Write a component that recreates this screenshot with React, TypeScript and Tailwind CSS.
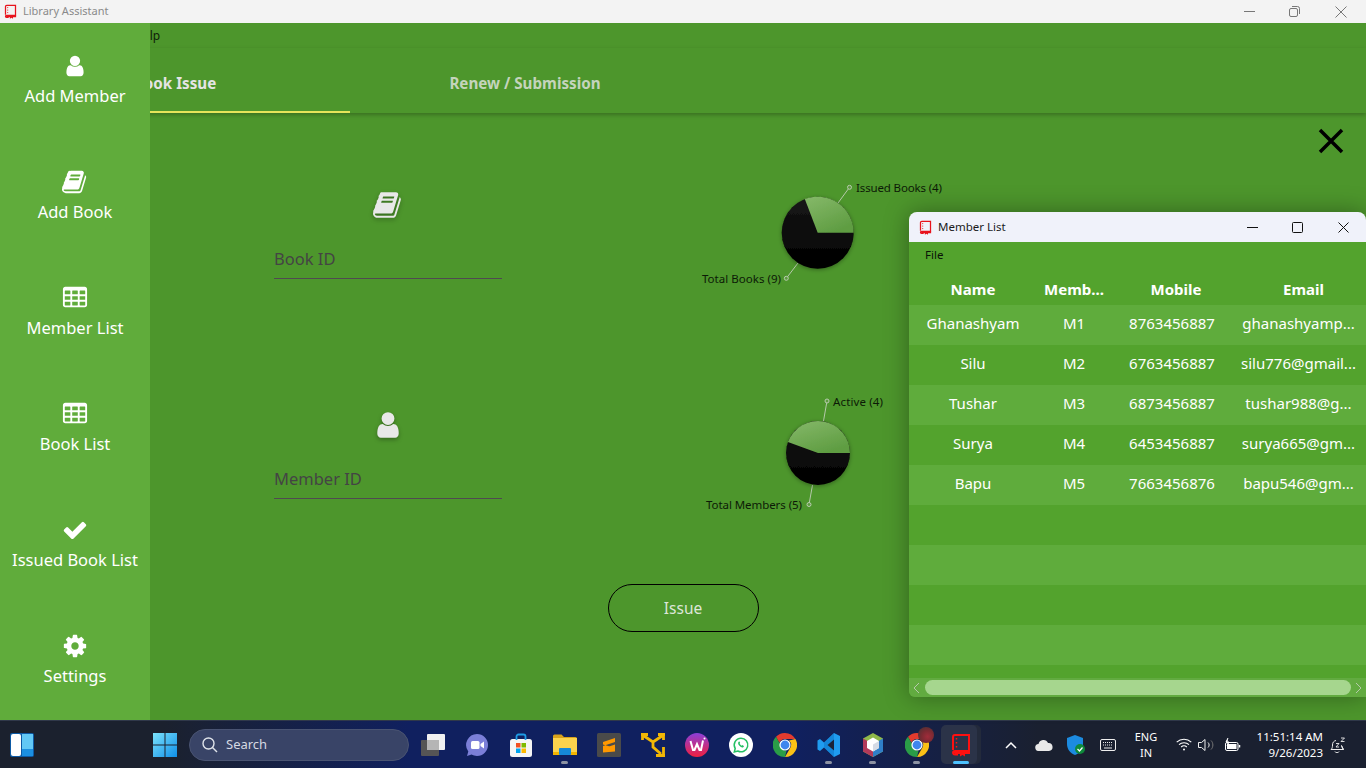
import React from "react";

const BOOK = "M1639 478q40 57 18 129l-275 906q-19 64-76.5 107.5t-122.5 43.5h-923q-77 0-148.5-53.5t-99.5-131.5q-24-67-2-127 0-4 3-27t4-37q1-8-3-21.5t-3-19.5q2-11 8-21t16.5-23.5 16.5-23.5q23-38 45-91.5t30-91.5q3-10 .5-30t-.5-28q3-11 17-28t17-23q21-36 42-92t25-90q1-9-2.5-32t.5-28q4-13 22-30.5t22-22.5q19-26 42.5-84.5t27.5-96.5q1-8-3-25.5t-2-26.5q2-8 9-18t18-23 17-21q8-12 16.5-30.5t15-35 16-36 19.5-32 26.5-23.5 36-11.5 47.5 5.5l-1 3q38-9 51-9h761q74 0 114 56t18 130l-274 906q-36 119-71.5 153.5t-128.5 34.5h-869q-27 0-38 15-11 16-1 43 24 70 144 70h923q29 0 56-15.5t35-41.5l300-987q7-22 5-57 38 15 59 43zm-1064 2q-4 13 2 22.5t20 9.5h608q13 0 25.5-9.5t16.5-22.5l21-64q4-13-2-22.5t-20-9.5h-608q-13 0-25.5 9.5t-16.5 22.5zm-83 256q-4 13 2 22.5t20 9.5h608q13 0 25.5-9.5t16.5-22.5l21-64q4-13-2-22.5t-20-9.5h-608q-13 0-25.5 9.5t-16.5 22.5z";
const USER = "M1536 1399q0 109-62.5 187t-150.5 78h-854q-88 0-150.5-78t-62.5-187q0-85 8.5-160.5t31.5-152 58.5-131 94-89 134.5-34.5q131 128 313 128t313-128q76 0 134.5 34.5t94 89 58.5 131 31.5 152 8.5 160.5zm-256-887q0 159-112.5 271.5t-271.5 112.5-271.5-112.5-112.5-271.5 112.5-271.5 271.5-112.5 271.5 112.5 112.5 271.5z";
const TABLE = "M576 1376v-192q0-14-9-23t-23-9h-320q-14 0-23 9t-9 23v192q0 14 9 23t23 9h320q14 0 23-9t9-23zm0-384v-192q0-14-9-23t-23-9h-320q-14 0-23 9t-9 23v192q0 14 9 23t23 9h320q14 0 23-9t9-23zm512 384v-192q0-14-9-23t-23-9h-320q-14 0-23 9t-9 23v192q0 14 9 23t23 9h320q14 0 23-9t9-23zm-512-768v-192q0-14-9-23t-23-9h-320q-14 0-23 9t-9 23v192q0 14 9 23t23 9h320q14 0 23-9t9-23zm512 384v-192q0-14-9-23t-23-9h-320q-14 0-23 9t-9 23v192q0 14 9 23t23 9h320q14 0 23-9t9-23zm512 384v-192q0-14-9-23t-23-9h-320q-14 0-23 9t-9 23v192q0 14 9 23t23 9h320q14 0 23-9t9-23zm-512-768v-192q0-14-9-23t-23-9h-320q-14 0-23 9t-9 23v192q0 14 9 23t23 9h320q14 0 23-9t9-23zm512 384v-192q0-14-9-23t-23-9h-320q-14 0-23 9t-9 23v192q0 14 9 23t23 9h320q14 0 23-9t9-23zm0-384v-192q0-14-9-23t-23-9h-320q-14 0-23 9t-9 23v192q0 14 9 23t23 9h320q14 0 23-9t9-23zm128-320v1088q0 66-47 113t-113 47h-1344q-66 0-113-47t-47-113v-1088q0-66 47-113t113-47h1344q66 0 113 47t47 113z";
const CHECK = "M1671 566q0 40-28 68l-724 724-136 136q-28 28-68 28t-68-28l-136-136-362-362q-28-28-28-68t28-68l136-136q28-28 68-28t68 28l294 295 656-657q28-28 68-28t68 28l136 136q28 28 28 68z";
const COG = "M1152 896q0-106-75-181t-181-75-181 75-75 181 75 181 181 75 181-75 75-181zm512-109v222q0 12-8 23t-20 13l-185 28q-19 54-39 91 35 50 107 138 10 12 10 25t-9 23q-27 37-99 108t-94 71q-12 0-26-9l-138-108q-44 23-91 38-16 136-29 186-7 28-36 28h-222q-14 0-24.5-8.5t-11.5-21.5l-28-184q-49-16-90-37l-141 107q-10 9-25 9-14 0-25-11-126-114-165-168-7-10-7-23 0-12 8-23 15-21 51-66.5t54-70.5q-27-50-41-99l-183-27q-13-2-21-12.5t-8-23.5v-222q0-12 8-23t19-13l186-28q14-46 39-92-40-57-107-138-10-12-10-24 0-10 9-23 26-36 98.5-107.5t94.5-71.5q13 0 26 10l138 107q44-23 91-38 16-136 29-186 7-28 36-28h222q14 0 24.5 8.5t11.5 21.5l28 184q49 16 90 37l142-107q9-9 24-9 13 0 25 10 129 119 165 170 7 8 7 22 0 12-8 23-15 21-51 66.5t-54 70.5q26 50 41 98l183 28q13 2 21 12.5t8 23.5z";

function Fa({ d, size, className }: { d: string; size: number; className?: string }) {
  return (
    <svg viewBox="0 0 1792 1792" width={size} height={size} fill="currentColor" className={className}>
      <path d={d} />
    </svg>
  );
}

function RedBook({ size, stroke = "#e8131c" }: { size: number; stroke?: string }) {
  return (
    <svg viewBox="0 0 24 24" width={size} height={size} fill="none">
      <path d="M4 17V4a2 2 0 0 1 2-2h14v16H6a2 2 0 0 0-2 2 2 2 0 0 0 2 1.500h3" stroke={stroke} strokeWidth="2" />
      <path d="M3.500 18.500H21v2.500h-5v2.500l-2.500-1.500L11 23.500v-2.500H6z" fill={stroke} />
      <path d="M7.500 5v1.500M7.500 9v1.500M7.500 13v1.500" stroke={stroke} strokeWidth="1.500" />
    </svg>
  );
}

const sideItems = [
  { d: USER, size: 24, label: "Add Member" },
  { d: BOOK, size: 26, label: "Add Book" },
  { d: TABLE, size: 26, label: "Member List" },
  { d: TABLE, size: 26, label: "Book List" },
  { d: CHECK, size: 26, label: "Issued Book List" },
  { d: COG, size: 26, label: "Settings" },
];

const members = [
  ["Ghanashyam", "M1", "8763456887", "ghanashyamp..."],
  ["Silu", "M2", "6763456887", "silu776@gmail..."],
  ["Tushar", "M3", "6873456887", "tushar988@g..."],
  ["Surya", "M4", "6453456887", "surya665@gm..."],
  ["Bapu", "M5", "7663456876", "bapu546@gm..."],
];

function PieOne() {
  return (
    <svg width={260} height={115} viewBox="690 175 260 115" className="block shrink-0">
      <defs>
        <linearGradient id="lg1" x1="0" y1="0" x2="0.6" y2="1">
          <stop offset="0" stopColor="#86b96a" />
          <stop offset="1" stopColor="#5f9d42" />
        </linearGradient>
        <linearGradient id="dk1" x1="0" y1="0" x2="0" y2="1">
          <stop offset="0" stopColor="#171717" />
          <stop offset="1" stopColor="#000" />
        </linearGradient>
        <filter id="ps1" x="-30%" y="-30%" width="160%" height="160%">
          <feDropShadow dx="0" dy="1" stdDeviation="2" floodOpacity="0.35" />
        </filter>
      </defs>
      <path d="M838 203L849.500 187.300M798 263L786.300 278.300" stroke="#b5c9aa" strokeWidth="1" />
      <circle cx="849.500" cy="187.300" r="2" fill="#5d9c3f" stroke="#b9cbb0" />
      <circle cx="786.300" cy="278.300" r="2" fill="#5d9c3f" stroke="#b9cbb0" />
      <g filter="url(#ps1)">
        <circle cx="817.700" cy="232.700" r="36" fill="url(#dk1)" />
        <path d="M817.700 232.700H853.700A36 36 0 0 0 804.800 199.100Z" fill="url(#lg1)" />
      </g>
      <text x="856" y="191.500" fontSize="11.500" fill="#0c1a06" fontFamily="'Noto Sans', sans-serif" textLength="86">Issued Books (4)</text>
      <text x="702" y="283" fontSize="11.500" fill="#0c1a06" fontFamily="'Noto Sans', sans-serif" textLength="79">Total Books (9)</text>
    </svg>
  );
}

function PieTwo() {
  return (
    <svg width={210} height={125} viewBox="690 390 210 125" className="block shrink-0">
      <defs>
        <linearGradient id="lg2" x1="0" y1="0" x2="0.6" y2="1">
          <stop offset="0" stopColor="#86b96a" />
          <stop offset="1" stopColor="#5f9d42" />
        </linearGradient>
        <linearGradient id="dk2" x1="0" y1="0" x2="0" y2="1">
          <stop offset="0" stopColor="#171717" />
          <stop offset="1" stopColor="#000" />
        </linearGradient>
        <filter id="ps2" x="-30%" y="-30%" width="160%" height="160%">
          <feDropShadow dx="0" dy="1" stdDeviation="2" floodOpacity="0.35" />
        </filter>
      </defs>
      <path d="M823.500 421L827 401M812.500 485L809 504.500" stroke="#b5c9aa" strokeWidth="1" />
      <circle cx="827" cy="401" r="2" fill="#5d9c3f" stroke="#b9cbb0" />
      <circle cx="809" cy="504.500" r="2" fill="#5d9c3f" stroke="#b9cbb0" />
      <g filter="url(#ps2)">
        <circle cx="818" cy="453" r="32" fill="url(#dk2)" />
        <path d="M818 453H850A32 32 0 0 0 787.930 442.060Z" fill="url(#lg2)" />
      </g>
      <text x="833" y="406" fontSize="11.500" fill="#0c1a06" fontFamily="'Noto Sans', sans-serif" textLength="50">Active (4)</text>
      <text x="706" y="509" fontSize="11.500" fill="#0c1a06" fontFamily="'Noto Sans', sans-serif" textLength="96">Total Members (5)</text>
    </svg>
  );
}

function Field({ d, iconSize, placeholder, pt }: { d: string; iconSize: number; placeholder: string; pt: string }) {
  return (
    <div className={`w-[228px] flex flex-col shrink-0 ${pt}`}>
      <div className="flex justify-center h-[28px] items-center text-[#e8e8e8] drop-shadow-[0_2px_2px_rgba(0,0,0,0.3)]">
        <Fa d={d} size={iconSize} />
      </div>
      <input
        readOnly
        placeholder={placeholder}
        className="mt-[24px] h-[36px] pb-[4px] w-full border-b border-[#4f4a50] bg-transparent text-[16.500px] outline-none placeholder:text-[#444444]"
      />
    </div>
  );
}

function Slot({ children, dot, active }: { children: React.ReactNode; dot?: boolean; active?: boolean }) {
  return (
    <div className="relative w-[44px] h-[48px] flex items-center justify-center shrink-0">
      {active && <div className="absolute left-[6px] top-[4px] h-[39px] w-[36px] rounded-[5px] bg-[#232a3b]" />}
      {active && <div className="absolute left-[2px] top-[4px] h-[39px] w-[36px] rounded-[5px] bg-[#2b3348]" />}
      <div className="relative flex">{children}</div>
      {dot && <div className="absolute left-[18px] top-[40px] h-[3px] w-[7px] rounded-full bg-[#8d93a3]" />}
      {active && <div className="absolute left-[14px] top-[40px] h-[3px] w-[16px] rounded-full bg-[#4cc2ff]" />}
    </div>
  );
}

function Chrome({ size = 24 }: { size?: number }) {
  return (
    <svg viewBox="0 0 24 24" width={size} height={size}>
      <path d="M12 0a12 12 0 0 1 10.400 6H12a6 6 0 0 0-5.600 3.700L3 3.800A12 12 0 0 1 12 0z" fill="#e33b2e" />
      <path d="M22.400 6A12 12 0 0 1 12 24l5.200-9A6 6 0 0 0 16 7.500z" fill="#fbc116" />
      <path d="M12 24A12 12 0 0 1 3 3.800L8 12.700A6 6 0 0 0 13.500 17.800z" fill="#2a9d47" />
      <circle cx="12" cy="12" r="5.600" fill="#fff" />
      <circle cx="12" cy="12" r="4.400" fill="#3f86ee" />
    </svg>
  );
}

export default function App() {
  const font = { fontFamily: "'Noto Sans', 'Open Sans', sans-serif" };
  return (
    <div className="relative w-[1366px] h-[768px] overflow-hidden flex flex-col bg-[#4d962c]" style={font}>
      {/* App title bar */}
      <div className="h-[23px] shrink-0 bg-[#f3f3f3] flex items-center">
        <div className="ml-[3px] flex"><RedBook size={15} /></div>
        <span className="ml-[5px] text-[11px] text-[#8a8a8a]">Library Assistant</span>
        <div className="ml-auto flex items-center text-[#777]">
          <svg width="11" height="11" viewBox="0 0 11 11" className="mr-[34px]"><path d="M0 5.500h11" stroke="currentColor" /></svg>
          <svg width="11" height="11" viewBox="0 0 11 11" className="mr-[35px]" fill="none" stroke="currentColor"><rect x="0.500" y="2.500" width="8" height="8" rx="1.500" /><path d="M3 0.500h5.500a2 2 0 0 1 2 2V8" /></svg>
          <svg width="12" height="12" viewBox="0 0 12 12" className="mr-[19px]" stroke="currentColor"><path d="M0.500 0.500l11 11M11.500 0.500l-11 11" /></svg>
        </div>
      </div>

      {/* App body */}
      <div className="h-[697px] shrink-0 flex">
        <aside className="w-[150px] shrink-0 bg-[#60ac3b] grid grid-rows-6 text-white">
          {sideItems.map((s) => (
            <div key={s.label} className="flex flex-col items-center justify-center gap-[5px] pb-[2px]">
              <div className="h-[26px] flex items-center"><Fa d={s.d} size={s.size} /></div>
              <span className="text-[16.500px] leading-[24px] whitespace-nowrap">{s.label}</span>
            </div>
          ))}
        </aside>

        <main className="flex-1 overflow-hidden">
          <div className="w-[1366px] -ml-[150px] h-full flex flex-col">
            <div className="h-[25px] shrink-0 pl-[134px] pt-[1px] flex items-center text-[12px] text-[#10200a]">Help</div>
            <div className="relative h-[65px] shrink-0 flex shadow-[0_2px_4px_rgba(0,0,0,0.25)]">
              <div className="w-[350px] pt-[8px] flex items-center justify-center border-b-2 border-[#e6e45a] text-[15.200px] font-bold text-[#e4e4e4]">Book Issue</div>
              <div className="w-[350px] pt-[6px] flex items-center justify-center text-[15.200px] font-bold text-[#c4d4bc]">Renew / Submission</div>
              <div className="ml-auto mr-[22px] mt-[80px] h-[26px] w-[26px] text-black">
                <svg viewBox="0 0 26 26" width="26" height="26"><path d="M2 2l22 22M24 2L2 24" stroke="currentColor" strokeWidth="3.500" /></svg>
              </div>
            </div>

            <div className="flex flex-col">
              <div className="flex items-start mt-[62px]">
                <div className="ml-[274px]"><Field d={BOOK} iconSize={30} placeholder="Book ID" pt="pt-[16px]" /></div>
                <div className="ml-[188px]"><PieOne /></div>
              </div>
              <div className="flex items-start mt-[100px]">
                <div className="ml-[274px]"><Field d={USER} iconSize={30} placeholder="Member ID" pt="pt-[21px]" /></div>
                <div className="ml-[188px]"><PieTwo /></div>
              </div>
              <button className="mt-[69px] mx-auto w-[151px] h-[48px] pt-[1px] rounded-full border border-black text-[15.500px] text-[#dde6d8]">Issue</button>
            </div>
          </div>
        </main>
      </div>

      {/* Taskbar */}
      <footer className="h-[48px] shrink-0 flex items-center border-t border-[#30384a] bg-[linear-gradient(90deg,#1b212e_0%,#1b212e_12%,#10205f_30%,#10205f_58%,#1a2030_76%,#1a2030_100%)] text-white">
        <div className="ml-[10px] w-[24px] h-[24px] rounded-[2px] bg-[#0d5aa5] flex gap-[1px] p-[1px] shrink-0">
          <div className="w-[10px] h-full rounded-[2px] bg-white" />
          <div className="flex-1 flex flex-col"><div className="flex-1 bg-[#62c8f5]" /><div className="h-[7px] bg-[#1c8fe0]" /></div>
        </div>
        <div className="ml-[109px] shrink-0">
          <Slot>
            <svg width="24" height="24" viewBox="0 0 24 24">
              <defs><linearGradient id="win" x1="0" y1="0" x2="1" y2="1"><stop offset="0" stopColor="#7ce2fb" /><stop offset="1" stopColor="#0f8fe8" /></linearGradient></defs>
              <path d="M0 0h11.500v11.500H0zM12.500 0H24v11.500H12.500zM0 12.500h11.500V24H0zM12.500 12.500H24V24H12.500z" fill="url(#win)" />
            </svg>
          </Slot>
        </div>
        <div className="ml-[2px] w-[220px] h-[32px] rounded-full bg-[#394467] border border-[#4a5472] flex items-center shrink-0 pl-[12px] gap-[8px]">
          <svg width="16" height="16" viewBox="0 0 16 16" fill="none" stroke="#dfe3ea" strokeWidth="1.400"><circle cx="6.500" cy="6.500" r="5.500" /><path d="M10.500 10.500L15 15" /></svg>
          <span className="text-[13px] text-[#d6d9e2]">Search</span>
        </div>
        <div className="ml-[2px] flex shrink-0">
          <Slot>
            <svg width="24" height="24" viewBox="0 0 24 24"><rect x="0" y="7" width="18" height="16" rx="1" fill="#555" /><rect x="6" y="1" width="18" height="16" rx="1" fill="#f1f1f1" /><rect x="6" y="7" width="12" height="10" fill="#b5b5b5" /></svg>
          </Slot>
          <Slot>
            <svg width="24" height="24" viewBox="0 0 24 24"><path d="M12 1a11 11 0 0 1 0 22c-2 0-4-.5-5.500-1.400L2 23l1.300-4.500A11 11 0 0 1 12 1z" fill="#7b7fd8" /><rect x="6" y="8" width="8.500" height="8" rx="1.500" fill="#fff" /><path d="M15.500 11l3.500-2.500v7L15.500 13z" fill="#fff" /></svg>
          </Slot>
          <Slot>
            <svg width="24" height="24" viewBox="0 0 24 24"><rect x="1" y="6" width="22" height="18" rx="2.500" fill="#f5f5f5" /><path d="M7.500 7V3.500a2 2 0 0 1 2-2h5a2 2 0 0 1 2 2V7" fill="none" stroke="#1e9ce6" strokeWidth="1.800" /><rect x="7" y="10" width="4.500" height="4.500" fill="#f25022" /><rect x="12.500" y="10" width="4.500" height="4.500" fill="#7fba00" /><rect x="7" y="15.500" width="4.500" height="4.500" fill="#00a4ef" /><rect x="12.500" y="15.500" width="4.500" height="4.500" fill="#ffb900" /></svg>
          </Slot>
          <Slot dot>
            <svg width="24" height="24" viewBox="0 0 24 24"><path d="M0 3a1.500 1.500 0 0 1 1.500-1.500h7L11 4h11.500A1.500 1.500 0 0 1 24 5.500V8H0z" fill="#d9a21b" /><path d="M0 5h24v17H0z" fill="#fcd34d" /><rect x="0" y="19" width="24" height="3" fill="#f4b400" /><rect x="6" y="15" width="12" height="7" rx="1" fill="#1689d8" /></svg>
          </Slot>
          <Slot>
            <svg width="24" height="24" viewBox="0 0 24 24"><rect width="24" height="24" rx="1.500" fill="#4a4a4a" /><path d="M18 5L6 9v4l12-4zM6 11.500L18 15v3.500l-12 1V15.500L18 11.500v3.500L6 19v-3.500z" fill="#ff9800" /></svg>
          </Slot>
          <Slot>
            <svg width="24" height="24" viewBox="0 0 24 24" fill="none" stroke="#f2b705" strokeWidth="2.800"><path d="M0 1.500h7M1.500 0v7M17 1.500h7M22.500 0v7M15 22.500h9M22.500 14v10M3 3l9 6 9-6M12 9v5l8 7" /></svg>
          </Slot>
          <Slot>
            <svg width="24" height="24" viewBox="0 0 24 24"><defs><linearGradient id="wps" x1="0" y1="0" x2="0" y2="1"><stop offset="0" stopColor="#8b3fd9" /><stop offset="1" stopColor="#f0203f" /></linearGradient></defs><circle cx="12" cy="12" r="12" fill="url(#wps)" /><path d="M5.500 8l2.500 9h1.500l2.500-6 2.500 6H16l2-9.500" fill="none" stroke="#fff" strokeWidth="2" /><circle cx="19.500" cy="5.500" r="1" fill="#fff" /></svg>
          </Slot>
          <Slot>
            <svg width="24" height="24" viewBox="0 0 24 24"><circle cx="12" cy="12" r="12" fill="#fff" /><path d="M12 5.200a6.800 6.800 0 0 0-5.800 10.300L5.300 19l3.500-1A6.800 6.800 0 1 0 12 5.200z" fill="none" stroke="#25c063" strokeWidth="1.500" /><path d="M9.700 8.700c-.9.800-.8 2.200.5 3.800 1.400 1.600 3 2.300 4 1.700.7-.4.800-1 .6-1.300l-1.400-.8-.7.600c-1-.4-1.700-1.200-2.100-2.100l.6-.7-.7-1.400c-.2-.1-.5-.1-.8.200z" fill="#25c063" /></svg>
          </Slot>
          <Slot><Chrome /></Slot>
          <Slot dot>
            <svg width="24" height="24" viewBox="0 0 24 24"><path d="M17 0l6 3v18l-6 3L7 14.500 3 18l-2.500-1.500v-9L3 6l4 3.500z" fill="#1f9cf0" /><path d="M17 0v24L7 14.500V9.500z" fill="#0a6fc2" opacity="0.500" /><path d="M17 6.500L10.500 12l6.500 5.500z" fill="#1b2338" /></svg>
          </Slot>
          <Slot dot>
            <svg width="24" height="24" viewBox="0 0 24 24"><path d="M12 0l10 5.500v13L12 24 2 18.500v-13z" fill="#8fb84a" /><path d="M2 5.500l10 5.500v13L2 18.500z" fill="#b23a5a" /><path d="M22 5.500L12 11v13l10-5.500z" fill="#2f7fc9" /><path d="M12 4.500l6 3.500v7l-6 3.500L6 15V8z" fill="#fff" /><path d="M12 11.500l6-3.500v7l-6 3.500z" fill="#d5dbe5" /></svg>
          </Slot>
          <Slot dot>
            <div className="relative">
              <Chrome />
              <div className="absolute -right-[5px] -top-[6px] w-[16px] h-[16px] rounded-full bg-[radial-gradient(circle_at_60%_60%,#a02c3a_0%,#7a2a32_45%,#3a3436_100%)]" />
            </div>
          </Slot>
          <Slot active><RedBook size={24} stroke="#ff1010" /></Slot>
        </div>
        <div className="ml-[20px] w-[16px] flex justify-center shrink-0">
          <svg width="12" height="8" viewBox="0 0 12 8" fill="none" stroke="#fff" strokeWidth="1.500"><path d="M1 7l5-5 5 5" /></svg>
        </div>
        <div className="ml-[15px] w-[20px] flex justify-center shrink-0">
          <svg width="18" height="12" viewBox="0 0 18 12"><path d="M4 12a3.500 3.500 0 0 1-.5-7A5 5 0 0 1 13 4a4 4 0 0 1 1 8z" fill="#e9e9e9" /></svg>
        </div>
        <div className="ml-[13px] w-[18px] flex justify-center shrink-0">
          <svg width="18" height="20" viewBox="0 0 18 20"><path d="M8 0l8 3v6c0 5-3 9-8 11-5-2-8-6-8-11V3z" fill="#1c8be0" /><circle cx="13" cy="14" r="5" fill="#0e8a3a" /><path d="M10.500 14l2 2 3-3.500" fill="none" stroke="#fff" strokeWidth="1.200" /></svg>
        </div>
        <div className="ml-[14px] w-[18px] flex justify-center shrink-0">
          <svg width="16" height="12" viewBox="0 0 16 12" fill="none" stroke="#eee"><rect x="0.500" y="0.500" width="15" height="11" rx="1.500" /><path d="M3 3.500h10M3 6h10" strokeDasharray="1 1" /><path d="M4 9h8" /></svg>
        </div>
        <div className="ml-[14px] w-[30px] text-center text-[11px] leading-[16px] shrink-0">ENG<br />IN</div>
        <div className="ml-[14px] w-[18px] flex justify-center shrink-0">
          <svg width="16" height="13" viewBox="0 0 16 13" fill="none" stroke="#fff" strokeWidth="1.100"><path d="M.7 4.200a10.500 10.500 0 0 1 14.600 0M3 6.700a7.200 7.200 0 0 1 10 0M5.200 9a4 4 0 0 1 5.600 0" /><circle cx="8" cy="11.500" r="1" fill="#fff" stroke="none" /></svg>
        </div>
        <div className="ml-[4px] w-[18px] flex justify-center shrink-0">
          <svg width="17" height="14" viewBox="0 0 17 14" fill="none" stroke="#eee"><path d="M.5 4.500h3L7 1.500v11l-3.500-3h-3zM10 4.500c1.500 1.500 1.500 3.500 0 5" /><path d="M13 2.500c2.500 2.500 2.500 6.500 0 9" stroke="#777" /></svg>
        </div>
        <div className="ml-[8px] w-[18px] flex justify-center shrink-0">
          <svg width="17" height="14" viewBox="0 0 17 14" fill="none" stroke="#fff"><rect x="1.500" y="4.500" width="12.500" height="8" rx="1.500" /><rect x="3" y="6" width="9.500" height="5" fill="#fff" stroke="none" /><path d="M15.500 7v2.500" strokeWidth="1.500" /><path d="M4 0L2 4h3L3 8" fill="#fff" /></svg>
        </div>
        <div className="w-[82px] text-right text-[11.500px] leading-[16px] shrink-0">11:51:14 AM<br />9/26/2023</div>
        <div className="ml-[7px] w-[16px] flex justify-center shrink-0">
          <svg width="16" height="16" viewBox="0 0 16 16" fill="none" stroke="#eee"><path d="M1 12.500c1.200-1 1.500-2.500 1.500-4.500 0-2.500 1.200-4 3.500-4.500M11.500 8.500c.2 1.800 1 3 2 4zM1 12.500h12.500M5 14.500a2.200 2.200 0 0 0 4 0" /><path d="M6 6.500h3l-3 3.500h3M11 1h3.500L11 4.500h3.500" strokeWidth="0.900" /></svg>
        </div>
      </footer>

      {/* Floating Member List window */}
      <section className="absolute left-[909px] top-[212px] w-[457px] h-[485px] rounded-tl-[8px] rounded-tr-[8px] rounded-bl-[6px] overflow-hidden flex flex-col bg-[#53a32d] shadow-[0_0_24px_rgba(0,0,0,0.35)]">
        <div className="h-[30px] shrink-0 bg-[#f0f2fa] flex items-center">
          <div className="ml-[9px] flex"><RedBook size={15} /></div>
          <span className="ml-[5px] text-[11.500px] text-[#1a1a1a]">Member List</span>
          <div className="ml-auto flex items-center text-[#111]">
            <svg width="11" height="11" viewBox="0 0 11 11" className="mr-[34px]"><path d="M0 5.500h11" stroke="currentColor" /></svg>
            <svg width="11" height="11" viewBox="0 0 11 11" className="mr-[35px]" fill="none" stroke="currentColor"><rect x="0.500" y="0.500" width="10" height="10" rx="1" /></svg>
            <svg width="11" height="11" viewBox="0 0 11 11" className="mr-[17px]" stroke="currentColor"><path d="M0.500 0.500l10 10M10.500 0.500l-10 10" /></svg>
          </div>
        </div>
        <div className="h-[25px] shrink-0 pl-[16px] flex items-center text-[11.500px] text-[#0a1406]">File</div>
        <div className="h-[38px] shrink-0 grid grid-cols-[128px_74px_130px_125px] items-center text-center pt-[6px] text-[15px] font-bold text-white">
          <span>Name</span><span>Memb...</span><span>Mobile</span><span>Email</span>
        </div>
        {members.map((m, i) => (
          <div key={m[0]} className={`h-[40px] shrink-0 grid grid-cols-[128px_74px_130px_125px] items-center text-center pb-[4px] text-[15px] text-white ${i % 2 === 0 ? "bg-[#5fac3c]" : "bg-[#53a32d]"}`}>
            <span>{m[0]}</span><span>{m[1]}</span><span className="pr-[8px]">{m[2]}</span><span className="pr-[10px] whitespace-nowrap">{m[3]}</span>
          </div>
        ))}
        {[0, 1, 2, 3].map((i) => (
          <div key={i} className={`h-[40px] shrink-0 ${i % 2 === 0 ? "bg-[#53a32d]" : "bg-[#5fac3c]"}`} />
        ))}
        <div className="flex-1" />
        <div className="h-[19px] shrink-0 bg-[#62ab40] flex items-center">
          <svg width="16" height="12" viewBox="0 0 16 12" fill="none" stroke="#b5c9aa" className="shrink-0"><path d="M10 1L5 6l5 5" /></svg>
          <div className="h-[15px] w-[426px] rounded-full bg-[#a6d68e]" />
          <svg width="15" height="12" viewBox="0 0 15 12" fill="none" stroke="#b5c9aa" className="ml-auto shrink-0"><path d="M5 1l5 5-5 5" /></svg>
        </div>
      </section>
    </div>
  );
}
